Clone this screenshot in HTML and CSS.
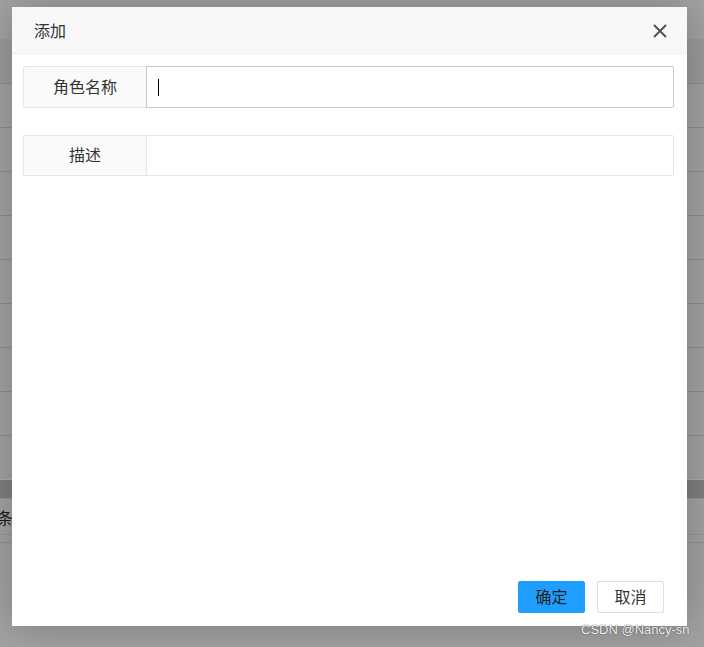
FILE: index.html
```html
<!DOCTYPE html>
<html lang="zh">
<head>
<meta charset="utf-8">
<title>添加</title>
<link rel="stylesheet" href="styles.css">
</head>
<body>
<div class="bg">
  <div class="bg-top"></div>
  <div class="bg-head"></div>
  <div class="bg-row"></div>
  <div class="bg-row"></div>
  <div class="bg-row"></div>
  <div class="bg-row"></div>
  <div class="bg-row"></div>
  <div class="bg-row"></div>
  <div class="bg-row"></div>
  <div class="bg-row"></div>
  <div class="bg-gap"></div>
  <div class="bg-band"></div>
  <div class="bg-page"><span class="bg-text">条</span></div>
  <div class="bg-after"></div>
</div>

<div class="dialog">
  <div class="dialog-head">
    <span class="dialog-title">添加</span>
    <svg class="dialog-close" width="14" height="14" viewBox="0 0 14 14">
      <path d="M1.5 1.5 L12.5 12.5 M12.5 1.5 L1.5 12.5" stroke="#4b4f5b" stroke-width="1.9" stroke-linecap="round" fill="none"/>
    </svg>
  </div>
  <div class="dialog-body">
    <div class="field">
      <div class="field-label">角色名称</div>
      <div class="field-input focused"><span class="caret"></span></div>
    </div>
    <div class="field">
      <div class="field-label">描述</div>
      <div class="field-input"></div>
    </div>
  </div>
  <div class="dialog-foot">
    <button class="btn btn-primary">确定</button>
    <button class="btn btn-default">取消</button>
  </div>
</div>

<div class="watermark">CSDN @Nancy-sn</div>
</body>
</html>
```

FILE: styles.css
```css
html, body {
  margin: 0;
  padding: 0;
}
body {
  width: 704px;
  height: 647px;
  overflow: hidden;
  background: #a3a3a3;
  font-family: "Noto Sans CJK SC", "Microsoft YaHei", sans-serif;
  position: relative;
}
.bg {
  display: flex;
  flex-direction: column;
}
.bg-top {
  height: 39px;
  background: #a3a3a3;
}
.bg-head {
  height: 44px;
  background: #9c9c9c;
  border-bottom: 1px solid #8f8f8f;
}
.bg-row {
  height: 43px;
  border-bottom: 1px solid #8f8f8f;
}
.bg-gap {
  height: 43px;
  border-bottom: 1px solid #b0b0b0;
}
.bg-band {
  height: 18px;
  background: #808080;
}
.bg-page {
  height: 35px;
  border-top: 1px solid #969696;
  border-bottom: 1px solid #969696;
  display: flex;
  align-items: center;
}
.bg-text {
  font-size: 16px;
  color: #1a1a1a;
  margin-left: -3px;
}
.bg-after {
  height: 7px;
  border-bottom: 1px solid #929292;
}

.dialog {
  position: absolute;
  left: 12px;
  top: 7px;
  width: 675px;
  height: 619px;
  background: #fff;
  box-shadow: 1px 1px 40px rgba(0, 0, 0, 0.25);
  display: flex;
  flex-direction: column;
}
.dialog-head {
  height: 47px;
  background: #f8f8f8;
  border-bottom: 1px solid #eeeeee;
  display: flex;
  align-items: center;
  justify-content: space-between;
  padding: 0 20px 0 22px;
  box-sizing: border-box;
}
.dialog-title {
  font-size: 16px;
  color: #333;
  padding-bottom: 1px;
}
.dialog-close {
  display: block;
  margin-top: 2px;
}
.dialog-body {
  flex: 1;
  padding: 12px 13px 0 11px;
  display: flex;
  flex-direction: column;
  gap: 27px;
}
.field {
  display: flex;
  height: 42px;
}
.field + .field {
  height: 41px;
}
.field-label {
  width: 123px;
  flex: none;
  background: #fafafa;
  border: 1px solid #e6e6e6;
  border-right: none;
  border-radius: 2px 0 0 2px;
  display: flex;
  align-items: center;
  justify-content: center;
  font-size: 16px;
  color: #333;
  padding-bottom: 3px;
  box-sizing: border-box;
}
.field-input {
  flex: 1;
  border: 1px solid #e6e6e6;
  border-radius: 0 2px 2px 0;
  display: flex;
  align-items: center;
  padding-left: 11px;
}
.field-input.focused {
  border-color: #c6c6c6;
}
.caret {
  width: 1px;
  height: 17px;
  background: #000;
}
.dialog-foot {
  display: flex;
  justify-content: flex-end;
  gap: 12px;
  padding: 0 23px 13px 0;
}
.btn {
  width: 67px;
  height: 32px;
  font-family: inherit;
  font-size: 16px;
  border-radius: 2px;
  padding: 0 0 2px 0;
  cursor: pointer;
}
.btn-primary {
  background: #1e9fff;
  border: 1px solid #1e9fff;
  color: #222;
}
.btn-default {
  background: #fff;
  border: 1px solid #dedede;
  color: #333;
}
.watermark {
  position: absolute;
  left: 581px;
  top: 622px;
  font-family: "Liberation Sans", Arial, sans-serif;
  font-size: 13px;
  color: #f2f2f2;
  text-shadow: 0 0 1px #555, 0 0 1px #555;
}
```
